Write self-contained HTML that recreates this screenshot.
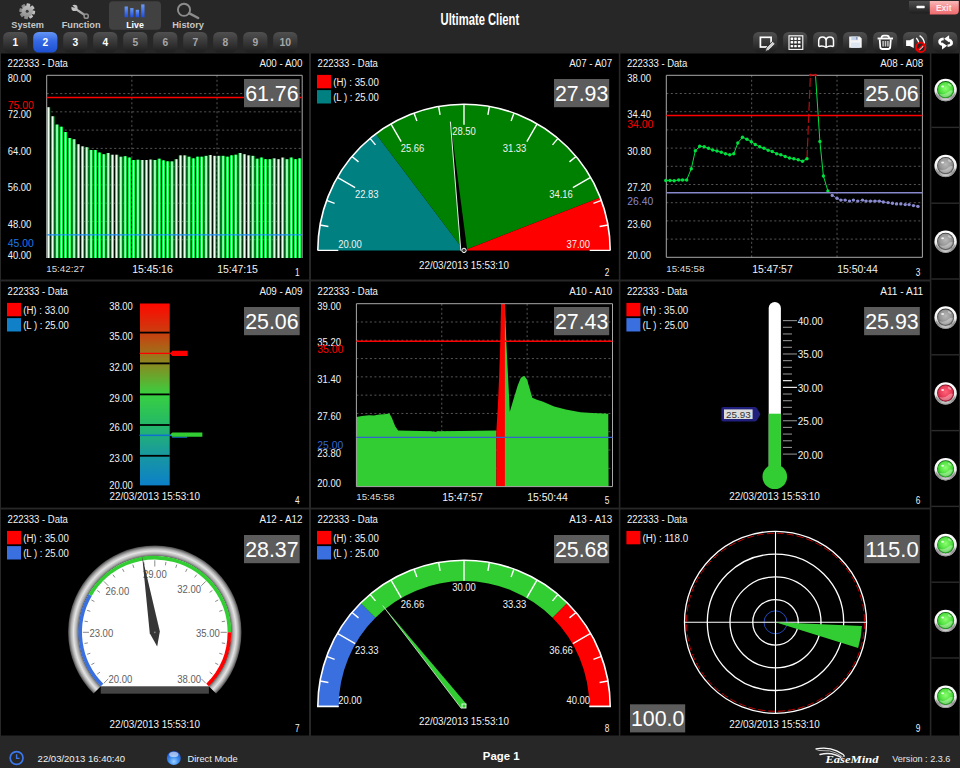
<!DOCTYPE html>
<html lang="en"><head><meta charset="utf-8"><title>Ultimate Client</title>
<style>
html,body{margin:0;padding:0;background:#272727;}
body{width:960px;height:768px;overflow:hidden;position:relative;font-family:"Liberation Sans","DejaVu Sans",sans-serif;}
header,main,aside,footer,section{position:absolute;margin:0;padding:0;overflow:hidden}
header{left:0;top:0;width:960px;height:53px}
main{left:0;top:53px;width:930px;height:684px}
aside{left:930px;top:53px;width:30px;height:684px}
footer{left:0;top:737px;width:960px;height:31px}
svg{position:absolute;left:0;top:0;display:block}
svg.defs{width:0;height:0}
text{font-family:"Liberation Sans","DejaVu Sans",sans-serif;}
.gd{stroke:#606060;stroke-width:0.9;stroke-dasharray:2 2.5;fill:none}
</style></head>
<body>
<svg class="defs" width="0" height="0" aria-hidden="true">
<defs>
<linearGradient id="barg" x1="0" x2="1" y1="0" y2="0"><stop offset="0" stop-color="#00e63c"/><stop offset="0.26" stop-color="#10ff4c"/><stop offset="0.42" stop-color="#f0fff0"/><stop offset="0.58" stop-color="#f0fff0"/><stop offset="0.74" stop-color="#10ff4c"/><stop offset="1" stop-color="#00e63c"/></linearGradient>
</defs><defs>
<linearGradient id="lvl" x1="0" x2="0" y1="0" y2="1">
<stop offset="0" stop-color="#ff0800"/><stop offset="0.166" stop-color="#c84010"/><stop offset="0.333" stop-color="#8a8a20"/>
<stop offset="0.5" stop-color="#38d040"/><stop offset="0.667" stop-color="#24b868"/><stop offset="0.833" stop-color="#1898a0"/><stop offset="1" stop-color="#0c80c8"/>
</linearGradient>
<linearGradient id="bez" gradientUnits="userSpaceOnUse" x1="0" x2="1" y1="0" y2="0"><stop offset="0" stop-color="#444"/></linearGradient>
<radialGradient id="bezel" gradientUnits="userSpaceOnUse" cx="154.8" cy="632.3" r="87">
<stop offset="0.875" stop-color="#626262"/><stop offset="0.905" stop-color="#b4b4b4"/><stop offset="0.935" stop-color="#e4e4e4"/><stop offset="0.962" stop-color="#b0b0b0"/><stop offset="1" stop-color="#404040"/>
</radialGradient>
<linearGradient id="btn" x1="0" x2="0" y1="0" y2="1"><stop offset="0" stop-color="#505050"/><stop offset="0.45" stop-color="#3a3a3a"/><stop offset="1" stop-color="#1e1e1e"/></linearGradient>
<linearGradient id="btnb" x1="0" x2="0" y1="0" y2="1"><stop offset="0" stop-color="#6494f4"/><stop offset="0.45" stop-color="#3468e4"/><stop offset="1" stop-color="#1c50d0"/></linearGradient>
<linearGradient id="exitg" x1="0" x2="0" y1="0" y2="1"><stop offset="0" stop-color="#f8b8b8"/><stop offset="0.5" stop-color="#f48c8c"/><stop offset="1" stop-color="#ee6c70"/></linearGradient>
<linearGradient id="liveb" x1="0" x2="0" y1="0" y2="1"><stop offset="0" stop-color="#6c9cf8"/><stop offset="1" stop-color="#1c4ce0"/></linearGradient>
<linearGradient id="ring" x1="0" x2="0" y1="0" y2="1"><stop offset="0" stop-color="#ffffff"/><stop offset="0.55" stop-color="#f0f0f0"/><stop offset="0.8" stop-color="#9a9a9a"/><stop offset="1" stop-color="#e8e8e8"/></linearGradient>
<radialGradient id="ledg" cx="0.5" cy="0.4" r="0.6"><stop offset="0" stop-color="#8cff70"/><stop offset="0.6" stop-color="#50e040"/><stop offset="1" stop-color="#1c9c1c"/></radialGradient>
<radialGradient id="ledx" cx="0.5" cy="0.4" r="0.6"><stop offset="0" stop-color="#b8b8b8"/><stop offset="0.6" stop-color="#969696"/><stop offset="1" stop-color="#5c5c5c"/></radialGradient>
<radialGradient id="ledr" cx="0.5" cy="0.4" r="0.6"><stop offset="0" stop-color="#ff6478"/><stop offset="0.6" stop-color="#e83c58"/><stop offset="1" stop-color="#a01830"/></radialGradient>
<radialGradient id="orb" cx="0.5" cy="0.75" r="0.7"><stop offset="0" stop-color="#9cd0ff"/><stop offset="0.5" stop-color="#3c8cf0"/><stop offset="1" stop-color="#1c50c8"/></radialGradient>
<linearGradient id="gearg" gradientUnits="userSpaceOnUse" x1="0" x2="0" y1="3" y2="19"><stop offset="0" stop-color="#c4c4c4"/><stop offset="1" stop-color="#888888"/></linearGradient>
<linearGradient id="wrg" gradientUnits="userSpaceOnUse" x1="75" y1="8" x2="86" y2="16"><stop offset="0" stop-color="#c4c4c4"/><stop offset="1" stop-color="#909090"/></linearGradient>
</defs>
</svg>
<header>
<svg width="960" height="53" viewBox="0 0 960 53" role="img" aria-label="Toolbar">
<g fill="url(#gearg)"><rect x="25.3" y="3.4000000000000004" width="3.8" height="15.8" rx="0.7" transform="rotate(10 27.2 11.3)"/><rect x="25.3" y="3.4000000000000004" width="3.8" height="15.8" rx="0.7" transform="rotate(55 27.2 11.3)"/><rect x="25.3" y="3.4000000000000004" width="3.8" height="15.8" rx="0.7" transform="rotate(100 27.2 11.3)"/><rect x="25.3" y="3.4000000000000004" width="3.8" height="15.8" rx="0.7" transform="rotate(145 27.2 11.3)"/><circle cx="27.2" cy="11.3" r="5.5"/></g><circle cx="27.2" cy="11.3" r="1.5" fill="#3a3a3a"/><text x="11.30" y="27.60" font-size="9.3" fill="#c6c6c6" font-weight="bold" textLength="32.60" lengthAdjust="spacingAndGlyphs">System</text><path d="M75.6 8.9L85 15.3" stroke="url(#wrg)" stroke-width="2.3" fill="none"/><circle cx="74.5" cy="7.9" r="3.1" fill="#c0c0c0"/><path d="M75.1 8.1L70.6 6.5L71.6 4.4Z" fill="#272727"/><circle cx="86.2" cy="16.2" r="2.1" fill="none" stroke="#8e8e8e" stroke-width="1.5"/><text x="61.70" y="27.60" font-size="9.3" fill="#c6c6c6" font-weight="bold" textLength="38.90" lengthAdjust="spacingAndGlyphs">Function</text><rect x="109" y="1.3" width="52" height="28.4" rx="4" fill="#414141"/><rect x="124.6" y="6.5" width="3.3" height="10.80" fill="url(#liveb)"/><rect x="130.2" y="8.1" width="3.3" height="9.20" fill="url(#liveb)"/><rect x="135.7" y="9.8" width="3.3" height="7.50" fill="url(#liveb)"/><rect x="141.2" y="4.4" width="3.3" height="12.90" fill="url(#liveb)"/><text x="126.20" y="27.60" font-size="9.3" fill="#ffffff" font-weight="bold" textLength="17.60" lengthAdjust="spacingAndGlyphs">Live</text><circle cx="184" cy="9.8" r="6.1" fill="none" stroke="#8c8c8c" stroke-width="1.9"/><path d="M189.4 13.4L198.2 18" stroke="#8c8c8c" stroke-width="2.4" stroke-linecap="round"/><text x="172.20" y="27.60" font-size="9.3" fill="#c6c6c6" font-weight="bold" textLength="31.80" lengthAdjust="spacingAndGlyphs">History</text><rect x="3.2" y="32" width="24.2" height="20.6" rx="5.5" fill="url(#btn)"/><text x="12.45" y="45.70" font-size="10.7" fill="#ffffff" font-weight="bold" textLength="5.70" lengthAdjust="spacingAndGlyphs">1</text><rect x="33.2" y="32" width="24.2" height="20.6" rx="5.5" fill="url(#btnb)"/><text x="42.45" y="45.70" font-size="10.7" fill="#ffffff" font-weight="bold" textLength="5.70" lengthAdjust="spacingAndGlyphs">2</text><rect x="63.2" y="32" width="24.2" height="20.6" rx="5.5" fill="url(#btn)"/><text x="72.45" y="45.70" font-size="10.7" fill="#ffffff" font-weight="bold" textLength="5.70" lengthAdjust="spacingAndGlyphs">3</text><rect x="93.2" y="32" width="24.2" height="20.6" rx="5.5" fill="url(#btn)"/><text x="102.45" y="45.70" font-size="10.7" fill="#ffffff" font-weight="bold" textLength="5.70" lengthAdjust="spacingAndGlyphs">4</text><rect x="123.2" y="32" width="24.2" height="20.6" rx="5.5" fill="url(#btn)"/><text x="132.45" y="45.70" font-size="10.7" fill="#a6a6a6" font-weight="bold" textLength="5.70" lengthAdjust="spacingAndGlyphs">5</text><rect x="153.2" y="32" width="24.2" height="20.6" rx="5.5" fill="url(#btn)"/><text x="162.45" y="45.70" font-size="10.7" fill="#a6a6a6" font-weight="bold" textLength="5.70" lengthAdjust="spacingAndGlyphs">6</text><rect x="183.2" y="32" width="24.2" height="20.6" rx="5.5" fill="url(#btn)"/><text x="192.45" y="45.70" font-size="10.7" fill="#a6a6a6" font-weight="bold" textLength="5.70" lengthAdjust="spacingAndGlyphs">7</text><rect x="213.2" y="32" width="24.2" height="20.6" rx="5.5" fill="url(#btn)"/><text x="222.45" y="45.70" font-size="10.7" fill="#a6a6a6" font-weight="bold" textLength="5.70" lengthAdjust="spacingAndGlyphs">8</text><rect x="243.2" y="32" width="24.2" height="20.6" rx="5.5" fill="url(#btn)"/><text x="252.45" y="45.70" font-size="10.7" fill="#a6a6a6" font-weight="bold" textLength="5.70" lengthAdjust="spacingAndGlyphs">9</text><rect x="273.2" y="32" width="24.2" height="20.6" rx="5.5" fill="url(#btn)"/><text x="279.50" y="45.70" font-size="10.7" fill="#a6a6a6" font-weight="bold" textLength="11.60" lengthAdjust="spacingAndGlyphs">10</text><text x="440.60" y="24.70" font-size="17" fill="#ffffff" font-weight="bold" textLength="78.60" lengthAdjust="spacingAndGlyphs">Ultimate Client</text><path d="M909 1h21v12.6h-17.5a3.5 3.5 0 0 1-3.5-3.5z" fill="url(#btn)"/><rect x="916.5" y="5.8" width="8.2" height="2.4" rx="0.6" fill="#ffffff"/><path d="M929.8 1h29v9.4a4 4 0 0 1-4 4h-25z" fill="url(#exitg)"/><text x="935.90" y="10.60" font-size="9.5" fill="#ffffff" font-weight="bold" textLength="15.70" lengthAdjust="spacingAndGlyphs" opacity="0.82">Exit</text><rect x="753.1" y="32" width="24.2" height="20.6" rx="5.5" fill="url(#btn)"/><rect x="783.1" y="32" width="24.2" height="20.6" rx="5.5" fill="url(#btn)"/><rect x="813.1" y="32" width="24.2" height="20.6" rx="5.5" fill="url(#btn)"/><rect x="843.1" y="32" width="24.2" height="20.6" rx="5.5" fill="url(#btn)"/><rect x="873.1" y="32" width="24.2" height="20.6" rx="5.5" fill="url(#btn)"/><rect x="903.1" y="32" width="24.2" height="20.6" rx="5.5" fill="url(#btn)"/><rect x="933.1" y="32" width="24.2" height="20.6" rx="5.5" fill="url(#btn)"/><rect x="760.4" y="37.3" width="10.7" height="9.7" fill="none" stroke="#ffffff" stroke-width="1.7"/><path d="M772.6 41.2l2.7 2.7-6.6 6.4-3.4 1.2 0.9-3.6z" fill="#d2d2d2" stroke="#2c2c2c" stroke-width="0.9"/><rect x="789" y="35.8" width="13.8" height="13.6" fill="none" stroke="#ffffff" stroke-width="1.1"/><rect x="790.6" y="37.5" width="2.6" height="2.4" rx="0.6" fill="#ffffff"/><rect x="790.6" y="41.099999999999994" width="2.6" height="2.4" rx="0.6" fill="#ffffff"/><rect x="790.6" y="44.9" width="2.6" height="2.4" rx="0.6" fill="#ffffff"/><rect x="794.2" y="37.5" width="2.6" height="2.4" rx="0.6" fill="#ffffff"/><rect x="794.2" y="41.099999999999994" width="2.6" height="2.4" rx="0.6" fill="#ffffff"/><rect x="794.2" y="44.9" width="2.6" height="2.4" rx="0.6" fill="#ffffff"/><rect x="797.9000000000001" y="37.5" width="2.6" height="2.4" rx="0.6" fill="#ffffff"/><rect x="797.9000000000001" y="41.099999999999994" width="2.6" height="2.4" rx="0.6" fill="#ffffff"/><rect x="797.9000000000001" y="44.9" width="2.6" height="2.4" rx="0.6" fill="#ffffff"/><path d="M818.7 46.6V40.6Q818.9 37 822.4 37T826.1 40.6V47.4M826.1 40.6Q826.3 37 829.9 37T833.5 40.6V46.6M818.7 46.6q3.9-1.5 7.4 0.9q3.6-2.4 7.4-0.9" fill="none" stroke="#ffffff" stroke-width="1.5" stroke-linejoin="round"/><path d="M849.2 36.6h10.6l1.9 1.9v9.3h-12.5z" fill="#f4f4f4"/><rect x="851.3" y="36.6" width="6.6" height="3.6" fill="#c4d2e8"/><rect x="856" y="37" width="1.4" height="2.6" fill="#8c9cb8"/><rect x="851" y="42.6" width="8.8" height="5.2" fill="#dce4f0"/><g fill="none" stroke="#ffffff" stroke-linejoin="round"><path d="M877.6 38.5h15.4" stroke-width="1.9"/><path d="M881.4 38q0.2-2.4 2.4-2.4h3q2.2 0 2.4 2.4" stroke-width="1.6"/><path d="M879.7 39.4l0.6 7.8q0.2 1.8 2 1.8h5.9q1.8 0 2-1.8l0.6-7.8" stroke-width="1.8"/><path d="M883.1 41v5.4M885.5 41v5.4M887.9 41v5.4" stroke-width="1.5" stroke="#c4c4c4"/></g><path d="M906.1 40.3h3.7l3.9-2.1v9.8l-3.9-2.1h-3.7z" fill="#ffffff"/><path d="M916.3 38q3.9 4.6 2.2 9.8M919.6 35.6q5.2 3.6 4.6 8.4q-0.6 3.6-3.6 6.2" fill="none" stroke="#ffffff" stroke-width="1.3"/><circle cx="920.7" cy="47.4" r="4.7" fill="#242424" stroke="#f40000" stroke-width="1.8"/><path d="M917.5 50.4l6.2-5.8" stroke="#f40000" stroke-width="1.7"/><path d="M919.4 49.9q2.6-1.6 3.8-3.8" stroke="#ffffff" stroke-width="1" fill="none"/><path d="M943.6 37.6Q937.2 38.2 938.4 43Q939.4 45.6 942.4 46L942.4 43.4Q940.8 42.6 941 41.4Q941.4 40.2 943.8 40.2Z" fill="#ffffff"/><path d="M941.9 42.2l5.2 3.6-5 3.6z" fill="#ffffff"/><g transform="rotate(180 945.6 42.3)"><path d="M943.6 37.6Q937.2 38.2 938.4 43Q939.4 45.6 942.4 46L942.4 43.4Q940.8 42.6 941 41.4Q941.4 40.2 943.8 40.2Z" fill="#ffffff"/><path d="M941.9 42.2l5.2 3.6-5 3.6z" fill="#ffffff"/></g>
</svg>
</header>
<main>
<section style="left:0px;top:0px;width:310px;height:228px"><svg width="310" height="228" viewBox="0 53 310 228" role="img" aria-label="Bar chart A00">
<rect x="1" y="53.5" width="308.00" height="226.00" fill="#000"/><text x="7.60" y="67.10" font-size="10" fill="#f2f2f2" textLength="60.30" lengthAdjust="spacingAndGlyphs">222333 - Data</text><text x="259.40" y="67.10" font-size="10" fill="#f2f2f2" textLength="43.00" lengthAdjust="spacingAndGlyphs">A00 - A00</text><line x1="46.7" y1="93.57" x2="302.2" y2="93.57" class="gd"/><line x1="46.7" y1="111.84" x2="302.2" y2="111.84" class="gd"/><line x1="46.7" y1="130.11" x2="302.2" y2="130.11" class="gd"/><line x1="46.7" y1="148.38" x2="302.2" y2="148.38" class="gd"/><line x1="46.7" y1="166.65" x2="302.2" y2="166.65" class="gd"/><line x1="46.7" y1="184.92" x2="302.2" y2="184.92" class="gd"/><line x1="46.7" y1="203.19" x2="302.2" y2="203.19" class="gd"/><line x1="46.7" y1="221.46" x2="302.2" y2="221.46" class="gd"/><line x1="46.7" y1="239.73" x2="302.2" y2="239.73" class="gd"/><line x1="131.87" y1="75.3" x2="131.87" y2="258" class="gd"/><line x1="217.03" y1="75.3" x2="217.03" y2="258" class="gd"/><g fill="url(#barg)"><rect x="46.85" y="107.20" width="3.31" height="150.80"/><rect x="51.11" y="116.20" width="3.31" height="141.80"/><rect x="55.37" y="124.50" width="3.31" height="133.50"/><rect x="59.63" y="126.70" width="3.31" height="131.30"/><rect x="63.88" y="132.00" width="3.31" height="126.00"/><rect x="68.14" y="138.00" width="3.31" height="120.00"/><rect x="72.40" y="139.20" width="3.31" height="118.80"/><rect x="76.66" y="144.20" width="3.31" height="113.80"/><rect x="80.92" y="146.30" width="3.31" height="111.70"/><rect x="85.18" y="147.20" width="3.31" height="110.80"/><rect x="89.43" y="150.00" width="3.31" height="108.00"/><rect x="93.69" y="150.00" width="3.31" height="108.00"/><rect x="97.95" y="152.50" width="3.31" height="105.50"/><rect x="102.21" y="154.20" width="3.31" height="103.80"/><rect x="106.47" y="153.00" width="3.31" height="105.00"/><rect x="110.73" y="154.70" width="3.31" height="103.30"/><rect x="114.98" y="154.70" width="3.31" height="103.30"/><rect x="119.24" y="156.70" width="3.31" height="101.30"/><rect x="123.50" y="156.20" width="3.31" height="101.80"/><rect x="127.76" y="157.50" width="3.31" height="100.50"/><rect x="132.02" y="160.00" width="3.31" height="98.00"/><rect x="136.28" y="159.70" width="3.31" height="98.30"/><rect x="140.53" y="160.00" width="3.31" height="98.00"/><rect x="144.79" y="160.00" width="3.31" height="98.00"/><rect x="149.05" y="159.50" width="3.31" height="98.50"/><rect x="153.31" y="160.00" width="3.31" height="98.00"/><rect x="157.57" y="158.70" width="3.31" height="99.30"/><rect x="161.83" y="160.33" width="3.31" height="97.67"/><rect x="166.08" y="161.33" width="3.31" height="96.67"/><rect x="170.34" y="161.33" width="3.31" height="96.67"/><rect x="174.60" y="159.17" width="3.31" height="98.83"/><rect x="178.86" y="155.33" width="3.31" height="102.67"/><rect x="183.12" y="155.33" width="3.31" height="102.67"/><rect x="187.38" y="156.67" width="3.31" height="101.33"/><rect x="191.63" y="158.33" width="3.31" height="99.67"/><rect x="195.89" y="156.67" width="3.31" height="101.33"/><rect x="200.15" y="156.67" width="3.31" height="101.33"/><rect x="204.41" y="155.83" width="3.31" height="102.17"/><rect x="208.67" y="155.00" width="3.31" height="103.00"/><rect x="212.93" y="155.83" width="3.31" height="102.17"/><rect x="217.18" y="155.83" width="3.31" height="102.17"/><rect x="221.44" y="155.83" width="3.31" height="102.17"/><rect x="225.70" y="156.67" width="3.31" height="101.33"/><rect x="229.96" y="155.33" width="3.31" height="102.67"/><rect x="234.22" y="154.67" width="3.31" height="103.33"/><rect x="238.48" y="153.00" width="3.31" height="105.00"/><rect x="242.73" y="154.17" width="3.31" height="103.83"/><rect x="246.99" y="155.33" width="3.31" height="102.67"/><rect x="251.25" y="155.83" width="3.31" height="102.17"/><rect x="255.51" y="158.67" width="3.31" height="99.33"/><rect x="259.77" y="157.50" width="3.31" height="100.50"/><rect x="264.02" y="159.17" width="3.31" height="98.83"/><rect x="268.28" y="159.17" width="3.31" height="98.83"/><rect x="272.54" y="158.33" width="3.31" height="99.67"/><rect x="276.80" y="159.17" width="3.31" height="98.83"/><rect x="281.06" y="157.50" width="3.31" height="100.50"/><rect x="285.32" y="159.17" width="3.31" height="98.83"/><rect x="289.57" y="157.50" width="3.31" height="100.50"/><rect x="293.83" y="159.17" width="3.31" height="98.83"/><rect x="298.09" y="158.33" width="3.31" height="99.67"/></g><path d="M46.7 258V75.3H302.2V258" fill="none" stroke="#a8a8a8" stroke-width="1"/><line x1="46.7" y1="97.6" x2="302.2" y2="97.6" stroke="#ff0000" stroke-width="1.5"/><line x1="46.7" y1="234.8" x2="302.2" y2="234.8" stroke="#1e90ff" stroke-width="1.3"/><text x="7.70" y="81.90" font-size="10" fill="#f2f2f2" textLength="23.60" lengthAdjust="spacingAndGlyphs">80.00</text><text x="7.70" y="118.30" font-size="10" fill="#f2f2f2" textLength="23.60" lengthAdjust="spacingAndGlyphs">72.00</text><text x="7.70" y="154.90" font-size="10" fill="#f2f2f2" textLength="23.60" lengthAdjust="spacingAndGlyphs">64.00</text><text x="7.70" y="191.10" font-size="10" fill="#f2f2f2" textLength="23.60" lengthAdjust="spacingAndGlyphs">56.00</text><text x="7.70" y="228.30" font-size="10" fill="#f2f2f2" textLength="23.60" lengthAdjust="spacingAndGlyphs">48.00</text><text x="7.70" y="259.10" font-size="10" fill="#f2f2f2" textLength="23.60" lengthAdjust="spacingAndGlyphs">40.00</text><text x="7.70" y="109.10" font-size="10.5" fill="#ff0000" textLength="26.00" lengthAdjust="spacingAndGlyphs">75.00</text><text x="7.70" y="246.80" font-size="10.5" fill="#1e78e6" textLength="26.00" lengthAdjust="spacingAndGlyphs">45.00</text><text x="46.20" y="271.60" font-size="9.5" fill="#dadada" textLength="38.20" lengthAdjust="spacingAndGlyphs">15:42:27</text><text x="132.20" y="273.20" font-size="10.5" fill="#f2f2f2" textLength="40.50" lengthAdjust="spacingAndGlyphs">15:45:16</text><text x="217.20" y="273.20" font-size="10.5" fill="#f2f2f2" textLength="40.70" lengthAdjust="spacingAndGlyphs">15:47:15</text><rect x="244" y="79" width="55.70" height="28.20" fill="#5c5c5c"/><text x="245.15" y="100.80" font-size="21.4" fill="#ffffff" textLength="53.40" lengthAdjust="spacingAndGlyphs">61.76</text><text x="294.90" y="276.30" font-size="10" fill="#f2f2f2" textLength="4.60" lengthAdjust="spacingAndGlyphs">1</text>
</svg></section>
<section style="left:310px;top:0px;width:310px;height:228px"><svg width="310" height="228" viewBox="310 53 310 228" role="img" aria-label="Half gauge A07">
<rect x="311" y="53.5" width="307.80" height="226.00" fill="#000"/><text x="317.60" y="67.10" font-size="10" fill="#f2f2f2" textLength="60.30" lengthAdjust="spacingAndGlyphs">222333 - Data</text><text x="569.20" y="67.10" font-size="10" fill="#f2f2f2" textLength="43.00" lengthAdjust="spacingAndGlyphs">A07 - A07</text><rect x="317.00" y="74.90" width="14" height="13.4" fill="#ff0000"/><text x="333.20" y="85.80" font-size="10" fill="#f2f2f2" textLength="45.60" lengthAdjust="spacingAndGlyphs">(H) : 35.00</text><rect x="317.00" y="90.10" width="14" height="13.4" fill="#008080"/><text x="333.20" y="101.00" font-size="10" fill="#f2f2f2" textLength="45.60" lengthAdjust="spacingAndGlyphs">(L ) : 25.00</text><path d="M464 250.4L317.80 250.40A146.2 146.2 0 0 1 375.89 133.73Z" fill="#008080"/><path d="M464 250.4L375.89 133.73A146.2 146.2 0 0 1 600.33 197.59Z" fill="#008000"/><path d="M464 250.4L600.33 197.59A146.2 146.2 0 0 1 610.20 250.40Z" fill="#ff0000"/><path d="M317.80 250.40L338.30 250.40M320.02 225.01L328.39 226.49M326.62 200.40L334.60 203.30M337.39 177.30L355.14 187.55M352.00 156.42L358.52 161.89M370.02 138.40L375.49 144.92M390.90 123.79L401.15 141.54M414.00 113.02L416.90 121.00M438.61 106.42L440.09 114.79M464.00 104.20L464.00 124.70M489.39 106.42L487.91 114.79M514.00 113.02L511.10 121.00M537.10 123.79L526.85 141.54M557.98 138.40L552.51 144.92M576.00 156.42L569.48 161.89M590.61 177.30L572.86 187.55M601.38 200.40L593.40 203.30M607.98 225.01L599.61 226.49M610.20 250.40L589.70 250.40" stroke="#ffffff" stroke-width="1.4" fill="none"/><path d="M317.8 250.4A146.2 146.2 0 0 1 610.2 250.4" fill="none" stroke="#ffffff" stroke-width="1.6"/><text x="338.20" y="247.90" font-size="10" fill="#f2f2f2" textLength="23.60" lengthAdjust="spacingAndGlyphs">20.00</text><text x="354.90" y="198.10" font-size="10" fill="#f2f2f2" textLength="23.60" lengthAdjust="spacingAndGlyphs">22.83</text><text x="400.70" y="152.30" font-size="10" fill="#f2f2f2" textLength="23.60" lengthAdjust="spacingAndGlyphs">25.66</text><text x="452.20" y="135.30" font-size="10" fill="#f2f2f2" textLength="23.60" lengthAdjust="spacingAndGlyphs">28.50</text><text x="502.70" y="152.30" font-size="10" fill="#f2f2f2" textLength="23.60" lengthAdjust="spacingAndGlyphs">31.33</text><text x="549.20" y="198.10" font-size="10" fill="#f2f2f2" textLength="23.60" lengthAdjust="spacingAndGlyphs">34.16</text><text x="566.50" y="247.90" font-size="10" fill="#f2f2f2" textLength="23.60" lengthAdjust="spacingAndGlyphs">37.00</text><path d="M450.38 121.62L467.18 250.06L460.82 250.74Z" fill="#000000"/><path d="M450.38 121.62L460.82 250.74" stroke="#ffffff" stroke-width="0.9" fill="none"/><circle cx="464" cy="250.4" r="2.2" fill="#333" stroke="#ffffff" stroke-width="1"/><text x="419.00" y="269.00" font-size="10" fill="#f2f2f2" textLength="90.00" lengthAdjust="spacingAndGlyphs">22/03/2013 15:53:10</text><rect x="554" y="79" width="55.20" height="28.20" fill="#5c5c5c"/><text x="554.90" y="100.80" font-size="21.4" fill="#ffffff" textLength="53.40" lengthAdjust="spacingAndGlyphs">27.93</text><text x="604.70" y="276.30" font-size="10" fill="#f2f2f2" textLength="4.60" lengthAdjust="spacingAndGlyphs">2</text>
</svg></section>
<section style="left:620px;top:0px;width:310px;height:228px"><svg width="310" height="228" viewBox="620 53 310 228" role="img" aria-label="Line chart A08">
<rect x="620.4" y="53.5" width="309.40" height="226.00" fill="#000"/><text x="627.00" y="67.10" font-size="10" fill="#f2f2f2" textLength="60.30" lengthAdjust="spacingAndGlyphs">222333 - Data</text><text x="880.20" y="67.10" font-size="10" fill="#f2f2f2" textLength="43.00" lengthAdjust="spacingAndGlyphs">A08 - A08</text><line x1="666.3" y1="93.50" x2="922.4" y2="93.50" class="gd"/><line x1="666.3" y1="111.70" x2="922.4" y2="111.70" class="gd"/><line x1="666.3" y1="129.90" x2="922.4" y2="129.90" class="gd"/><line x1="666.3" y1="148.10" x2="922.4" y2="148.10" class="gd"/><line x1="666.3" y1="166.30" x2="922.4" y2="166.30" class="gd"/><line x1="666.3" y1="184.50" x2="922.4" y2="184.50" class="gd"/><line x1="666.3" y1="202.70" x2="922.4" y2="202.70" class="gd"/><line x1="666.3" y1="220.90" x2="922.4" y2="220.90" class="gd"/><line x1="666.3" y1="239.10" x2="922.4" y2="239.10" class="gd"/><line x1="751.67" y1="75.3" x2="751.67" y2="257.3" class="gd"/><line x1="837.03" y1="75.3" x2="837.03" y2="257.3" class="gd"/><path d="M666.3 257.3V75.3H922.4V257.3" fill="none" stroke="#a8a8a8" stroke-width="1"/><line x1="666.3" y1="257.3" x2="922.4" y2="257.3" stroke="#a8a8a8"/><polyline points="665.8,180.5 670.0,180.5 674.2,180.7 678.7,180.0 682.5,180.0 686.7,180.0 691.3,168.7 695.3,150.8 699.7,146.3 704.2,146.8 708.5,148.3 712.7,150.0 717.0,151.0 721.3,152.2 725.5,153.8 729.7,154.7 733.8,153.8 737.8,143.0 742.5,137.2 747.0,139.3 751.3,141.7 755.3,144.5 759.7,146.8 764.0,148.3 768.2,150.2 772.3,151.5 776.7,153.7 780.8,154.7 785.2,156.5 789.5,158.0 793.8,158.8 798.2,159.8 802.5,161.2 807.0,158.8" fill="none" stroke="#00e040" stroke-width="1"/><polyline points="807.0,158.8 810.4,75.1" fill="none" stroke="#b01010" stroke-width="1.2" stroke-dasharray="9 3"/><polyline points="810.4,75.1 815.5,75.1" fill="none" stroke="#e01010" stroke-width="1.2"/><polyline points="815.5,75.1 819.9,141.5 823.4,176.0 827.9,190.9" fill="none" stroke="#00e040" stroke-width="1"/><polyline points="827.9,190.9 832.3,195.4 837.0,198.2 840.8,200.1 845.1,200.1 849.5,201.1 853.4,200.1 857.8,201.1 862.5,200.1 866.1,201.1 870.5,201.1 875.0,201.1 879.4,201.1 883.3,202.0 888.0,202.6 892.4,203.3 896.5,203.9 900.8,203.9 905.2,204.6 909.1,204.6 913.5,205.6 918.0,206.4" fill="none" stroke="#8a8ad0" stroke-width="1" stroke-dasharray="2 2"/><circle cx="665.8" cy="180.5" r="1.7" fill="#00e040"/><circle cx="670.0" cy="180.5" r="1.7" fill="#00e040"/><circle cx="674.2" cy="180.7" r="1.7" fill="#00e040"/><circle cx="678.7" cy="180.0" r="1.7" fill="#00e040"/><circle cx="682.5" cy="180.0" r="1.7" fill="#00e040"/><circle cx="686.7" cy="180.0" r="1.7" fill="#00e040"/><circle cx="691.3" cy="168.7" r="1.7" fill="#00e040"/><circle cx="695.3" cy="150.8" r="1.7" fill="#00e040"/><circle cx="699.7" cy="146.3" r="1.7" fill="#00e040"/><circle cx="704.2" cy="146.8" r="1.7" fill="#00e040"/><circle cx="708.5" cy="148.3" r="1.7" fill="#00e040"/><circle cx="712.7" cy="150.0" r="1.7" fill="#00e040"/><circle cx="717.0" cy="151.0" r="1.7" fill="#00e040"/><circle cx="721.3" cy="152.2" r="1.7" fill="#00e040"/><circle cx="725.5" cy="153.8" r="1.7" fill="#00e040"/><circle cx="729.7" cy="154.7" r="1.7" fill="#00e040"/><circle cx="733.8" cy="153.8" r="1.7" fill="#00e040"/><circle cx="737.8" cy="143.0" r="1.7" fill="#00e040"/><circle cx="742.5" cy="137.2" r="1.7" fill="#00e040"/><circle cx="747.0" cy="139.3" r="1.7" fill="#00e040"/><circle cx="751.3" cy="141.7" r="1.7" fill="#00e040"/><circle cx="755.3" cy="144.5" r="1.7" fill="#00e040"/><circle cx="759.7" cy="146.8" r="1.7" fill="#00e040"/><circle cx="764.0" cy="148.3" r="1.7" fill="#00e040"/><circle cx="768.2" cy="150.2" r="1.7" fill="#00e040"/><circle cx="772.3" cy="151.5" r="1.7" fill="#00e040"/><circle cx="776.7" cy="153.7" r="1.7" fill="#00e040"/><circle cx="780.8" cy="154.7" r="1.7" fill="#00e040"/><circle cx="785.2" cy="156.5" r="1.7" fill="#00e040"/><circle cx="789.5" cy="158.0" r="1.7" fill="#00e040"/><circle cx="793.8" cy="158.8" r="1.7" fill="#00e040"/><circle cx="798.2" cy="159.8" r="1.7" fill="#00e040"/><circle cx="802.5" cy="161.2" r="1.7" fill="#00e040"/><circle cx="807.0" cy="158.8" r="1.7" fill="#00e040"/><circle cx="819.9" cy="141.5" r="1.7" fill="#00e040"/><circle cx="823.4" cy="176.0" r="1.7" fill="#00e040"/><circle cx="827.9" cy="190.9" r="1.7" fill="#00e040"/><circle cx="832.3" cy="195.4" r="1.7" fill="#8a8ad0"/><circle cx="837.0" cy="198.2" r="1.7" fill="#8a8ad0"/><circle cx="840.8" cy="200.1" r="1.7" fill="#8a8ad0"/><circle cx="845.1" cy="200.1" r="1.7" fill="#8a8ad0"/><circle cx="849.5" cy="201.1" r="1.7" fill="#8a8ad0"/><circle cx="853.4" cy="200.1" r="1.7" fill="#8a8ad0"/><circle cx="857.8" cy="201.1" r="1.7" fill="#8a8ad0"/><circle cx="862.5" cy="200.1" r="1.7" fill="#8a8ad0"/><circle cx="866.1" cy="201.1" r="1.7" fill="#8a8ad0"/><circle cx="870.5" cy="201.1" r="1.7" fill="#8a8ad0"/><circle cx="875.0" cy="201.1" r="1.7" fill="#8a8ad0"/><circle cx="879.4" cy="201.1" r="1.7" fill="#8a8ad0"/><circle cx="883.3" cy="202.0" r="1.7" fill="#8a8ad0"/><circle cx="888.0" cy="202.6" r="1.7" fill="#8a8ad0"/><circle cx="892.4" cy="203.3" r="1.7" fill="#8a8ad0"/><circle cx="896.5" cy="203.9" r="1.7" fill="#8a8ad0"/><circle cx="900.8" cy="203.9" r="1.7" fill="#8a8ad0"/><circle cx="905.2" cy="204.6" r="1.7" fill="#8a8ad0"/><circle cx="909.1" cy="204.6" r="1.7" fill="#8a8ad0"/><circle cx="913.5" cy="205.6" r="1.7" fill="#8a8ad0"/><circle cx="918.0" cy="206.4" r="1.7" fill="#8a8ad0"/><circle cx="810.4" cy="75.1" r="1.4" fill="#c01010"/><circle cx="815.5" cy="75.1" r="1.4" fill="#c01010"/><line x1="666.3" y1="115.5" x2="922.4" y2="115.5" stroke="#ff0000" stroke-width="1.4"/><line x1="666.3" y1="192.8" x2="922.4" y2="192.8" stroke="#8888cc" stroke-width="1.4"/><text x="627.30" y="81.90" font-size="10" fill="#f2f2f2" textLength="23.60" lengthAdjust="spacingAndGlyphs">38.00</text><text x="627.30" y="117.80" font-size="10" fill="#f2f2f2" textLength="23.60" lengthAdjust="spacingAndGlyphs">34.40</text><text x="627.30" y="154.90" font-size="10" fill="#f2f2f2" textLength="23.60" lengthAdjust="spacingAndGlyphs">30.80</text><text x="627.30" y="191.10" font-size="10" fill="#f2f2f2" textLength="23.60" lengthAdjust="spacingAndGlyphs">27.20</text><text x="627.30" y="228.30" font-size="10" fill="#f2f2f2" textLength="23.60" lengthAdjust="spacingAndGlyphs">23.60</text><text x="627.30" y="259.10" font-size="10" fill="#f2f2f2" textLength="23.60" lengthAdjust="spacingAndGlyphs">20.00</text><text x="627.30" y="127.80" font-size="10.5" fill="#ff0000" textLength="26.00" lengthAdjust="spacingAndGlyphs">34.00</text><text x="627.30" y="204.80" font-size="10.5" fill="#8888cc" textLength="26.00" lengthAdjust="spacingAndGlyphs">26.40</text><text x="666.20" y="271.60" font-size="9.5" fill="#dadada" textLength="38.20" lengthAdjust="spacingAndGlyphs">15:45:58</text><text x="752.20" y="273.20" font-size="10.5" fill="#f2f2f2" textLength="40.50" lengthAdjust="spacingAndGlyphs">15:47:57</text><text x="837.20" y="273.20" font-size="10.5" fill="#f2f2f2" textLength="40.70" lengthAdjust="spacingAndGlyphs">15:50:44</text><rect x="864.1" y="79" width="55.70" height="28.20" fill="#5c5c5c"/><text x="865.25" y="100.80" font-size="21.4" fill="#ffffff" textLength="53.40" lengthAdjust="spacingAndGlyphs">25.06</text><text x="915.70" y="276.30" font-size="10" fill="#f2f2f2" textLength="4.60" lengthAdjust="spacingAndGlyphs">3</text>
</svg></section>
<section style="left:0px;top:228px;width:310px;height:228px"><svg width="310" height="228" viewBox="0 281 310 228" role="img" aria-label="Level bar A09">
<rect x="1" y="281.5" width="308.00" height="226.10" fill="#000"/><text x="7.60" y="295.10" font-size="10" fill="#f2f2f2" textLength="60.30" lengthAdjust="spacingAndGlyphs">222333 - Data</text><text x="259.40" y="295.10" font-size="10" fill="#f2f2f2" textLength="43.00" lengthAdjust="spacingAndGlyphs">A09 - A09</text><rect x="7.00" y="302.90" width="14" height="13.4" fill="#ff0000"/><text x="23.20" y="313.80" font-size="10" fill="#f2f2f2" textLength="45.60" lengthAdjust="spacingAndGlyphs">(H) : 33.00</text><rect x="7.00" y="318.10" width="14" height="13.4" fill="#1080c8"/><text x="23.20" y="329.00" font-size="10" fill="#f2f2f2" textLength="45.60" lengthAdjust="spacingAndGlyphs">(L ) : 25.00</text><rect x="140" y="303.5" width="29.70" height="181.90" fill="url(#lvl)"/><rect x="140" y="331.70" width="29.70" height="1.8" fill="#000"/><rect x="140" y="362.50" width="29.70" height="1.8" fill="#000"/><rect x="140" y="393.50" width="29.70" height="1.8" fill="#000"/><rect x="140" y="424.10" width="29.70" height="1.8" fill="#000"/><rect x="140" y="454.90" width="29.70" height="1.8" fill="#000"/><text x="109.20" y="310.10" font-size="10" fill="#f2f2f2" textLength="23.60" lengthAdjust="spacingAndGlyphs">38.00</text><text x="109.20" y="340.20" font-size="10" fill="#f2f2f2" textLength="23.60" lengthAdjust="spacingAndGlyphs">35.00</text><text x="109.20" y="371.10" font-size="10" fill="#f2f2f2" textLength="23.60" lengthAdjust="spacingAndGlyphs">32.00</text><text x="109.20" y="401.60" font-size="10" fill="#f2f2f2" textLength="23.60" lengthAdjust="spacingAndGlyphs">29.00</text><text x="109.20" y="431.30" font-size="10" fill="#f2f2f2" textLength="23.60" lengthAdjust="spacingAndGlyphs">26.00</text><text x="109.20" y="462.00" font-size="10" fill="#f2f2f2" textLength="23.60" lengthAdjust="spacingAndGlyphs">23.00</text><text x="109.20" y="489.30" font-size="10" fill="#f2f2f2" textLength="23.60" lengthAdjust="spacingAndGlyphs">20.00</text><line x1="139.5" y1="353.4" x2="171.7" y2="353.4" stroke="#ff0000" stroke-width="1.3"/><path d="M170.0 353.4l2.4 -2.6h15.2v5.2h-15.2z" fill="#ff0000"/><line x1="139.5" y1="435.3" x2="171" y2="435.3" stroke="#1070d0" stroke-width="1.5"/><path d="M171 436.4l1.5 1.4h14.6v-1.4z" fill="#1070d0"/><path d="M170.2 434.6l2.2 -2.1h30v4.2h-30z" fill="#32cd32"/><text x="109.55" y="500.00" font-size="10" fill="#f2f2f2" textLength="90.50" lengthAdjust="spacingAndGlyphs">22/03/2013 15:53:10</text><rect x="244" y="307" width="55.70" height="28.20" fill="#5c5c5c"/><text x="245.15" y="328.80" font-size="21.4" fill="#ffffff" textLength="53.40" lengthAdjust="spacingAndGlyphs">25.06</text><text x="294.90" y="504.40" font-size="10" fill="#f2f2f2" textLength="4.60" lengthAdjust="spacingAndGlyphs">4</text>
</svg></section>
<section style="left:310px;top:228px;width:310px;height:228px"><svg width="310" height="228" viewBox="310 281 310 228" role="img" aria-label="Area chart A10">
<rect x="311" y="281.5" width="307.80" height="226.10" fill="#000"/><text x="317.60" y="295.10" font-size="10" fill="#f2f2f2" textLength="60.30" lengthAdjust="spacingAndGlyphs">222333 - Data</text><text x="569.20" y="295.10" font-size="10" fill="#f2f2f2" textLength="43.00" lengthAdjust="spacingAndGlyphs">A10 - A10</text><line x1="356.4" y1="321.99" x2="612.5" y2="321.99" class="gd"/><line x1="356.4" y1="340.28" x2="612.5" y2="340.28" class="gd"/><line x1="356.4" y1="358.57" x2="612.5" y2="358.57" class="gd"/><line x1="356.4" y1="376.86" x2="612.5" y2="376.86" class="gd"/><line x1="356.4" y1="395.15" x2="612.5" y2="395.15" class="gd"/><line x1="356.4" y1="413.44" x2="612.5" y2="413.44" class="gd"/><line x1="356.4" y1="431.73" x2="612.5" y2="431.73" class="gd"/><line x1="356.4" y1="450.02" x2="612.5" y2="450.02" class="gd"/><line x1="356.4" y1="468.31" x2="612.5" y2="468.31" class="gd"/><line x1="441.77" y1="303.7" x2="441.77" y2="486.6" class="gd"/><line x1="527.13" y1="303.7" x2="527.13" y2="486.6" class="gd"/><polygon points="356.4,486.6 356.4,416.9 362.0,416.0 369.0,415.2 374.0,415.6 379.2,414.6 384.0,414.2 389.4,413.4 391.7,417.5 395.2,426.2 398.1,430.6 420.0,430.9 431.7,431.2 434.6,432.1 437.5,431.2 460.0,430.9 496.4,430.6 496.4,486.6" fill="#32cd32"/><polygon points="496.4,486.6 496.4,430.6 497.9,405.0 499.1,378.0 500.2,345.0 501.1,303.7 505.0,303.7 505.0,486.6" fill="#ff0000"/><polygon points="504.9,486.6 504.9,303.7 506.5,345.0 509.8,411.7 513.3,400.0 517.7,385.4 520.5,378.5 522.1,376.7 524.4,376.1 527.0,379.6 529.5,388.0 532.3,397.7 537.0,399.8 542.5,401.5 554.2,406.4 565.8,409.6 580.4,412.2 592.1,413.1 608.3,413.7 608.6,486.6" fill="#32cd32"/><path d="M356.4 486.6V303.7H612.5V486.6" fill="none" stroke="#a8a8a8" stroke-width="1"/><line x1="356.4" y1="486.6" x2="612.5" y2="486.6" stroke="#a8a8a8"/><line x1="356.4" y1="341.3" x2="612.5" y2="341.3" stroke="#ff0000" stroke-width="1.4"/><line x1="356.4" y1="437.4" x2="612.5" y2="437.4" stroke="#3264d2" stroke-width="1.4"/><text x="317.30" y="310.20" font-size="10" fill="#f2f2f2" textLength="23.60" lengthAdjust="spacingAndGlyphs">39.00</text><text x="317.30" y="345.80" font-size="10" fill="#f2f2f2" textLength="23.60" lengthAdjust="spacingAndGlyphs">35.20</text><text x="317.30" y="383.40" font-size="10" fill="#f2f2f2" textLength="23.60" lengthAdjust="spacingAndGlyphs">31.40</text><text x="317.30" y="420.00" font-size="10" fill="#f2f2f2" textLength="23.60" lengthAdjust="spacingAndGlyphs">27.60</text><text x="317.30" y="456.60" font-size="10" fill="#f2f2f2" textLength="23.60" lengthAdjust="spacingAndGlyphs">23.80</text><text x="317.30" y="487.30" font-size="10" fill="#f2f2f2" textLength="23.60" lengthAdjust="spacingAndGlyphs">20.00</text><text x="317.30" y="353.30" font-size="10.5" fill="#ff0000" textLength="26.00" lengthAdjust="spacingAndGlyphs">35.00</text><text x="317.30" y="448.50" font-size="10.5" fill="#3264d2" textLength="26.00" lengthAdjust="spacingAndGlyphs">25.00</text><text x="356.20" y="499.60" font-size="9.5" fill="#dadada" textLength="38.20" lengthAdjust="spacingAndGlyphs">15:45:58</text><text x="442.20" y="501.20" font-size="10.5" fill="#f2f2f2" textLength="40.50" lengthAdjust="spacingAndGlyphs">15:47:57</text><text x="527.20" y="501.20" font-size="10.5" fill="#f2f2f2" textLength="40.70" lengthAdjust="spacingAndGlyphs">15:50:44</text><rect x="554" y="307" width="55.20" height="28.20" fill="#5c5c5c"/><text x="554.90" y="328.80" font-size="21.4" fill="#ffffff" textLength="53.40" lengthAdjust="spacingAndGlyphs">27.43</text><text x="604.70" y="504.40" font-size="10" fill="#f2f2f2" textLength="4.60" lengthAdjust="spacingAndGlyphs">5</text>
</svg></section>
<section style="left:620px;top:228px;width:310px;height:228px"><svg width="310" height="228" viewBox="620 281 310 228" role="img" aria-label="Thermometer A11">
<rect x="620.4" y="281.5" width="309.40" height="226.10" fill="#000"/><text x="627.00" y="295.10" font-size="10" fill="#f2f2f2" textLength="60.30" lengthAdjust="spacingAndGlyphs">222333 - Data</text><text x="880.20" y="295.10" font-size="10" fill="#f2f2f2" textLength="43.00" lengthAdjust="spacingAndGlyphs">A11 - A11</text><rect x="626.40" y="302.90" width="14" height="13.4" fill="#ff0000"/><text x="642.60" y="313.80" font-size="10" fill="#f2f2f2" textLength="45.60" lengthAdjust="spacingAndGlyphs">(H) : 35.00</text><rect x="626.40" y="318.10" width="14" height="13.4" fill="#3a6fe0"/><text x="642.60" y="329.00" font-size="10" fill="#f2f2f2" textLength="45.60" lengthAdjust="spacingAndGlyphs">(L ) : 25.00</text><path d="M768.6999999999999 470V308.1a6.1 6.1 0 0 1 12.2 0V470z" fill="#ffffff"/><rect x="768.6999999999999" y="413.7" width="12.2" height="58" fill="#32cd32"/><circle cx="774.8" cy="476.8" r="12.3" fill="#32cd32"/><line x1="782.9" y1="454.10" x2="797" y2="454.10" stroke="#8c8c8c" stroke-width="1.1"/><text x="797.80" y="458.50" font-size="10.5" fill="#f2f2f2" textLength="25.00" lengthAdjust="spacingAndGlyphs">20.00</text><line x1="782.9" y1="447.43" x2="792" y2="447.43" stroke="#8c8c8c" stroke-width="1.1"/><line x1="782.9" y1="440.75" x2="792" y2="440.75" stroke="#8c8c8c" stroke-width="1.1"/><line x1="782.9" y1="434.08" x2="792" y2="434.08" stroke="#8c8c8c" stroke-width="1.1"/><line x1="782.9" y1="427.40" x2="792" y2="427.40" stroke="#8c8c8c" stroke-width="1.1"/><line x1="782.9" y1="420.73" x2="797" y2="420.73" stroke="#8c8c8c" stroke-width="1.1"/><text x="797.80" y="425.12" font-size="10.5" fill="#f2f2f2" textLength="25.00" lengthAdjust="spacingAndGlyphs">25.00</text><line x1="782.9" y1="414.05" x2="792" y2="414.05" stroke="#8c8c8c" stroke-width="1.1"/><line x1="782.9" y1="407.38" x2="792" y2="407.38" stroke="#8c8c8c" stroke-width="1.1"/><line x1="782.9" y1="400.70" x2="792" y2="400.70" stroke="#8c8c8c" stroke-width="1.1"/><line x1="782.9" y1="394.03" x2="792" y2="394.03" stroke="#8c8c8c" stroke-width="1.1"/><line x1="782.9" y1="387.35" x2="797" y2="387.35" stroke="#ffffff" stroke-width="1.1"/><text x="797.80" y="391.75" font-size="10.5" fill="#f2f2f2" textLength="25.00" lengthAdjust="spacingAndGlyphs">30.00</text><line x1="782.9" y1="380.68" x2="792" y2="380.68" stroke="#ffffff" stroke-width="1.1"/><line x1="782.9" y1="374.00" x2="792" y2="374.00" stroke="#8c8c8c" stroke-width="1.1"/><line x1="782.9" y1="367.33" x2="792" y2="367.33" stroke="#8c8c8c" stroke-width="1.1"/><line x1="782.9" y1="360.65" x2="792" y2="360.65" stroke="#8c8c8c" stroke-width="1.1"/><line x1="782.9" y1="353.98" x2="797" y2="353.98" stroke="#8c8c8c" stroke-width="1.1"/><text x="797.80" y="358.38" font-size="10.5" fill="#f2f2f2" textLength="25.00" lengthAdjust="spacingAndGlyphs">35.00</text><line x1="782.9" y1="347.30" x2="792" y2="347.30" stroke="#8c8c8c" stroke-width="1.1"/><line x1="782.9" y1="340.62" x2="792" y2="340.62" stroke="#8c8c8c" stroke-width="1.1"/><line x1="782.9" y1="333.95" x2="792" y2="333.95" stroke="#8c8c8c" stroke-width="1.1"/><line x1="782.9" y1="327.28" x2="792" y2="327.28" stroke="#8c8c8c" stroke-width="1.1"/><line x1="782.9" y1="320.60" x2="797" y2="320.60" stroke="#8c8c8c" stroke-width="1.1"/><text x="797.80" y="325.00" font-size="10.5" fill="#f2f2f2" textLength="25.00" lengthAdjust="spacingAndGlyphs">40.00</text><path d="M723 407h31.5q1.5 0 2.4 1.2l3.6 6-3.6 6q-.9 1.2-2.4 1.2h-31.5q-1.6 0-1.6-1.6v-11.2q0-1.6 1.6-1.6z" fill="#20207c"/><rect x="724" y="409.4" width="28.6" height="9.6" fill="#dcdcdc"/><text x="726.00" y="417.80" font-size="9.5" fill="#333333" textLength="24.60" lengthAdjust="spacingAndGlyphs">25.93</text><text x="729.35" y="500.00" font-size="10" fill="#f2f2f2" textLength="90.50" lengthAdjust="spacingAndGlyphs">22/03/2013 15:53:10</text><rect x="864.1" y="307" width="55.70" height="28.20" fill="#5c5c5c"/><text x="865.25" y="328.80" font-size="21.4" fill="#ffffff" textLength="53.40" lengthAdjust="spacingAndGlyphs">25.93</text><text x="915.70" y="504.40" font-size="10" fill="#f2f2f2" textLength="4.60" lengthAdjust="spacingAndGlyphs">6</text>
</svg></section>
<section style="left:0px;top:456px;width:310px;height:228px"><svg width="310" height="228" viewBox="0 509 310 228" role="img" aria-label="Dial gauge A12">
<rect x="1" y="509.5" width="308.00" height="226.00" fill="#000"/><text x="7.60" y="523.10" font-size="10" fill="#f2f2f2" textLength="60.30" lengthAdjust="spacingAndGlyphs">222333 - Data</text><text x="259.40" y="523.10" font-size="10" fill="#f2f2f2" textLength="43.00" lengthAdjust="spacingAndGlyphs">A12 - A12</text><rect x="7.00" y="530.90" width="14" height="13.4" fill="#ff0000"/><text x="23.20" y="541.80" font-size="10" fill="#f2f2f2" textLength="45.60" lengthAdjust="spacingAndGlyphs">(H) : 35.00</text><rect x="7.00" y="546.10" width="14" height="13.4" fill="#3a6fe0"/><text x="23.20" y="557.00" font-size="10" fill="#f2f2f2" textLength="45.60" lengthAdjust="spacingAndGlyphs">(L ) : 25.00</text><path d="M100.71 686.39A76.5 76.5 0 1 1 208.89 686.39Z" fill="#ffffff"/><path d="M97.17 689.93A81.5 81.5 0 1 1 212.43 689.93" fill="none" stroke="url(#bezel)" stroke-width="10.4"/><rect x="100.71" y="686.89" width="108.19" height="6.8" fill="#444444"/><path d="M102.05 685.05A74.6 74.6 0 0 1 90.19 595.00" fill="none" stroke="#3a6fe0" stroke-width="3.6"/><path d="M90.19 595.00A74.6 74.6 0 0 1 229.40 632.30" fill="none" stroke="#32cd32" stroke-width="3.6"/><path d="M229.40 632.30A74.6 74.6 0 0 1 207.55 685.05" fill="none" stroke="#ff0000" stroke-width="3.6"/><path d="M103.89 683.21L108.27 678.83M97.20 674.15L99.95 672.15M91.36 664.62L94.39 663.08M87.08 654.30L90.32 653.25M84.48 643.44L87.83 642.91M82.80 632.30L89.00 632.30M84.48 621.16L87.83 621.69M87.08 610.30L90.32 611.35M91.36 599.98L94.39 601.52M97.20 590.45L99.95 592.45M103.89 581.39L108.27 585.77M112.95 574.70L114.95 577.45M122.48 568.86L124.02 571.89M132.80 564.58L133.85 567.82M143.66 561.98L144.19 565.33M154.80 560.30L154.80 566.50M165.94 561.98L165.41 565.33M176.80 564.58L175.75 567.82M187.12 568.86L185.58 571.89M196.65 574.70L194.65 577.45M205.71 581.39L201.33 585.77M212.40 590.45L209.65 592.45M218.24 599.98L215.21 601.52M222.52 610.30L219.28 611.35M225.12 621.16L221.77 621.69M226.80 632.30L220.60 632.30M225.12 643.44L221.77 642.91M222.52 654.30L219.28 653.25M218.24 664.62L215.21 663.08M212.40 674.15L209.65 672.15M205.71 683.21L201.33 678.83" stroke="#8a8a8a" stroke-width="1" fill="none"/><text x="108.50" y="682.90" font-size="10.2" fill="#606060" textLength="23.80" lengthAdjust="spacingAndGlyphs">20.00</text><text x="89.40" y="637.00" font-size="10.2" fill="#606060" textLength="23.80" lengthAdjust="spacingAndGlyphs">23.00</text><text x="105.40" y="595.20" font-size="10.2" fill="#606060" textLength="23.80" lengthAdjust="spacingAndGlyphs">26.00</text><text x="142.90" y="578.10" font-size="10.2" fill="#606060" textLength="23.80" lengthAdjust="spacingAndGlyphs">29.00</text><text x="177.30" y="593.10" font-size="10.2" fill="#606060" textLength="23.80" lengthAdjust="spacingAndGlyphs">32.00</text><text x="196.00" y="637.00" font-size="10.2" fill="#606060" textLength="23.80" lengthAdjust="spacingAndGlyphs">35.00</text><text x="177.30" y="682.90" font-size="10.2" fill="#606060" textLength="23.80" lengthAdjust="spacingAndGlyphs">38.00</text><path d="M142.16 556.34L149.77 633.14L157.18 646.60L159.83 631.46Z" fill="#363636"/><circle cx="154.8" cy="632.3" r="0.9" fill="#888"/><text x="109.55" y="727.80" font-size="10" fill="#f2f2f2" textLength="90.50" lengthAdjust="spacingAndGlyphs">22/03/2013 15:53:10</text><rect x="244" y="535" width="55.70" height="28.20" fill="#5c5c5c"/><text x="245.15" y="556.80" font-size="21.4" fill="#ffffff" textLength="53.40" lengthAdjust="spacingAndGlyphs">28.37</text><text x="294.90" y="732.30" font-size="10" fill="#f2f2f2" textLength="4.60" lengthAdjust="spacingAndGlyphs">7</text>
</svg></section>
<section style="left:310px;top:456px;width:310px;height:228px"><svg width="310" height="228" viewBox="310 509 310 228" role="img" aria-label="Arc gauge A13">
<rect x="311" y="509.5" width="307.80" height="226.00" fill="#000"/><text x="317.60" y="523.10" font-size="10" fill="#f2f2f2" textLength="60.30" lengthAdjust="spacingAndGlyphs">222333 - Data</text><text x="569.20" y="523.10" font-size="10" fill="#f2f2f2" textLength="43.00" lengthAdjust="spacingAndGlyphs">A13 - A13</text><rect x="317.00" y="530.90" width="14" height="13.4" fill="#ff0000"/><text x="333.20" y="541.80" font-size="10" fill="#f2f2f2" textLength="45.60" lengthAdjust="spacingAndGlyphs">(H) : 35.00</text><rect x="317.00" y="546.10" width="14" height="13.4" fill="#3a6fe0"/><text x="333.20" y="557.00" font-size="10" fill="#f2f2f2" textLength="45.60" lengthAdjust="spacingAndGlyphs">(L ) : 25.00</text><path d="M338.70 706.40L317.80 706.40A146.2 146.2 0 0 1 360.62 603.02L375.40 617.80A125.3 125.3 0 0 0 338.70 706.40Z" fill="#3a6fe0"/><path d="M375.40 617.80L360.62 603.02A146.2 146.2 0 0 1 567.38 603.02L552.60 617.80A125.3 125.3 0 0 0 375.40 617.80Z" fill="#32cd32"/><path d="M552.60 617.80L567.38 603.02A146.2 146.2 0 0 1 610.20 706.40L589.30 706.40A125.3 125.3 0 0 0 552.60 617.80Z" fill="#ff0000"/><path d="M317.80 706.40L338.30 706.40M320.02 681.01L328.39 682.49M326.62 656.40L334.60 659.30M337.39 633.30L355.14 643.55M352.00 612.42L358.52 617.89M370.02 594.40L375.49 600.92M390.90 579.79L401.15 597.54M414.00 569.02L416.90 577.00M438.61 562.42L440.09 570.79M464.00 560.20L464.00 580.70M489.39 562.42L487.91 570.79M514.00 569.02L511.10 577.00M537.10 579.79L526.85 597.54M557.98 594.40L552.51 600.92M576.00 612.42L569.48 617.89M590.61 633.30L572.86 643.55M601.38 656.40L593.40 659.30M607.98 681.01L599.61 682.49M610.20 706.40L589.70 706.40" stroke="#ffffff" stroke-width="1.4" fill="none"/><path d="M317.8 706.4A146.2 146.2 0 0 1 610.2 706.4" fill="none" stroke="#ffffff" stroke-width="1.6"/><path d="M317.0 706.4H338.7M589.3 706.4H611.0" stroke="#ffffff" stroke-width="1.5"/><text x="338.20" y="703.90" font-size="10" fill="#f2f2f2" textLength="23.60" lengthAdjust="spacingAndGlyphs">20.00</text><text x="354.90" y="653.60" font-size="10" fill="#f2f2f2" textLength="23.60" lengthAdjust="spacingAndGlyphs">23.33</text><text x="400.70" y="608.10" font-size="10" fill="#f2f2f2" textLength="23.60" lengthAdjust="spacingAndGlyphs">26.66</text><text x="452.20" y="591.30" font-size="10" fill="#f2f2f2" textLength="23.60" lengthAdjust="spacingAndGlyphs">30.00</text><text x="502.70" y="608.10" font-size="10" fill="#f2f2f2" textLength="23.60" lengthAdjust="spacingAndGlyphs">33.33</text><text x="549.20" y="653.60" font-size="10" fill="#f2f2f2" textLength="23.60" lengthAdjust="spacingAndGlyphs">36.66</text><text x="566.50" y="703.90" font-size="10" fill="#f2f2f2" textLength="23.60" lengthAdjust="spacingAndGlyphs">40.00</text><path d="M382.71 605.59L466.65 704.27L461.35 708.53Z" fill="#32cd32"/><path d="M382.71 605.59L461.35 708.53" stroke="#d8f0d8" stroke-width="0.8" fill="none"/><rect x="462" y="704.0" width="4" height="4" fill="#32cd32" stroke="#e8ffe8" stroke-width="0.9"/><text x="419.00" y="724.70" font-size="10" fill="#f2f2f2" textLength="90.00" lengthAdjust="spacingAndGlyphs">22/03/2013 15:53:10</text><rect x="554" y="535" width="55.20" height="28.20" fill="#5c5c5c"/><text x="554.90" y="556.80" font-size="21.4" fill="#ffffff" textLength="53.40" lengthAdjust="spacingAndGlyphs">25.68</text><text x="604.70" y="732.30" font-size="10" fill="#f2f2f2" textLength="4.60" lengthAdjust="spacingAndGlyphs">8</text>
</svg></section>
<section style="left:620px;top:456px;width:310px;height:228px"><svg width="310" height="228" viewBox="620 509 310 228" role="img" aria-label="Radar 9">
<rect x="620.4" y="509.5" width="309.40" height="226.00" fill="#000"/><text x="627.00" y="523.10" font-size="10" fill="#f2f2f2" textLength="60.30" lengthAdjust="spacingAndGlyphs">222333 - Data</text><rect x="626.40" y="530.90" width="14" height="13.4" fill="#ff0000"/><text x="642.60" y="541.80" font-size="10" fill="#f2f2f2" textLength="45.60" lengthAdjust="spacingAndGlyphs">(H) : 118.0</text><circle cx="775.5" cy="622.3" r="22.75" fill="none" stroke="#ffffff" stroke-width="1.3"/><circle cx="775.5" cy="622.3" r="45.5" fill="none" stroke="#ffffff" stroke-width="1.3"/><circle cx="775.5" cy="622.3" r="68.2" fill="none" stroke="#ffffff" stroke-width="1.3"/><circle cx="775.5" cy="622.3" r="91" fill="none" stroke="#ffffff" stroke-width="1.3"/><circle cx="775.5" cy="622.3" r="89" fill="none" stroke="#c00000" stroke-width="1" stroke-dasharray="7 3"/><circle cx="775.5" cy="622.3" r="11.5" fill="none" stroke="#2850c8" stroke-width="0.9"/><path d="M775.5 531.3V713.3M684.5 622.3H866.5" stroke="#ffffff" stroke-width="1.1"/><path d="M775.5 622.3L861.92 626.07A86.5 86.5 0 0 1 858.13 647.88Z" fill="#32cd32"/><text x="729.35" y="727.60" font-size="10" fill="#f2f2f2" textLength="90.50" lengthAdjust="spacingAndGlyphs">22/03/2013 15:53:10</text><rect x="864.1" y="535" width="55.70" height="28.20" fill="#5c5c5c"/><text x="865.25" y="556.80" font-size="21.4" fill="#ffffff" textLength="53.40" lengthAdjust="spacingAndGlyphs">115.0</text><rect x="630" y="704.3" width="55.20" height="28.10" fill="#5c5c5c"/><text x="630.90" y="726.00" font-size="21.4" fill="#ffffff" textLength="53.40" lengthAdjust="spacingAndGlyphs">100.0</text><text x="915.70" y="732.30" font-size="10" fill="#f2f2f2" textLength="4.60" lengthAdjust="spacingAndGlyphs">9</text>
</svg></section>
</main>
<aside>
<svg width="30" height="684" viewBox="930 53 30 684" role="img" aria-label="Status indicators">
<rect x="931.4" y="53.5" width="27.6" height="682" fill="#000000"/><circle cx="945.6" cy="90.0" r="11.2" fill="url(#ring)"/><path d="M936.0 93.4q3.4 7.4 9.6 7.4t9.6-7.4" fill="none" stroke="#8c8c8c" stroke-width="1.1" opacity="0.8"/><circle cx="945.6" cy="89.6" r="8.5" fill="#0c5c0c"/><circle cx="945.6" cy="90.0" r="8.1" fill="url(#ledg)"/><ellipse cx="942.6" cy="86.6" rx="1.5" ry="1" fill="#ffffff" opacity="0.8"/><ellipse cx="949.6" cy="85.0" rx="2.1" ry="1" fill="#ffffff" opacity="0.4" transform="rotate(35 949.6 85.0)"/><path d="M939.3000000000001 93.4q4.5 2 8.5 -1.2q3 -3 5 -1.4q-1.4 5.6 -7 6.4q-4.2 0.2 -6.5 -3.8z" fill="#d8ffd0" opacity="0.45"/><rect x="931.4" y="126.70" width="27.6" height="1.4" fill="#2b2b2b"/><circle cx="945.6" cy="165.84" r="11.2" fill="url(#ring)"/><path d="M936.0 169.24q3.4 7.4 9.6 7.4t9.6-7.4" fill="none" stroke="#8c8c8c" stroke-width="1.1" opacity="0.8"/><circle cx="945.6" cy="165.44" r="8.5" fill="#3c3c3c"/><circle cx="945.6" cy="165.84" r="8.1" fill="url(#ledx)"/><ellipse cx="942.6" cy="162.44" rx="1.5" ry="1" fill="#ffffff" opacity="0.8"/><ellipse cx="949.6" cy="160.84" rx="2.1" ry="1" fill="#ffffff" opacity="0.4" transform="rotate(35 949.6 160.84)"/><path d="M939.3000000000001 169.24q4.5 2 8.5 -1.2q3 -3 5 -1.4q-1.4 5.6 -7 6.4q-4.2 0.2 -6.5 -3.8z" fill="#e6e6e6" opacity="0.45"/><rect x="931.4" y="202.50" width="27.6" height="1.4" fill="#2b2b2b"/><circle cx="945.6" cy="241.68" r="11.2" fill="url(#ring)"/><path d="M936.0 245.08q3.4 7.4 9.6 7.4t9.6-7.4" fill="none" stroke="#8c8c8c" stroke-width="1.1" opacity="0.8"/><circle cx="945.6" cy="241.28" r="8.5" fill="#3c3c3c"/><circle cx="945.6" cy="241.68" r="8.1" fill="url(#ledx)"/><ellipse cx="942.6" cy="238.28" rx="1.5" ry="1" fill="#ffffff" opacity="0.8"/><ellipse cx="949.6" cy="236.68" rx="2.1" ry="1" fill="#ffffff" opacity="0.4" transform="rotate(35 949.6 236.68)"/><path d="M939.3000000000001 245.08q4.5 2 8.5 -1.2q3 -3 5 -1.4q-1.4 5.6 -7 6.4q-4.2 0.2 -6.5 -3.8z" fill="#e6e6e6" opacity="0.45"/><rect x="931.4" y="278.30" width="27.6" height="1.4" fill="#2b2b2b"/><circle cx="945.6" cy="317.52" r="11.2" fill="url(#ring)"/><path d="M936.0 320.91999999999996q3.4 7.4 9.6 7.4t9.6-7.4" fill="none" stroke="#8c8c8c" stroke-width="1.1" opacity="0.8"/><circle cx="945.6" cy="317.12" r="8.5" fill="#3c3c3c"/><circle cx="945.6" cy="317.52" r="8.1" fill="url(#ledx)"/><ellipse cx="942.6" cy="314.12" rx="1.5" ry="1" fill="#ffffff" opacity="0.8"/><ellipse cx="949.6" cy="312.52" rx="2.1" ry="1" fill="#ffffff" opacity="0.4" transform="rotate(35 949.6 312.52)"/><path d="M939.3000000000001 320.91999999999996q4.5 2 8.5 -1.2q3 -3 5 -1.4q-1.4 5.6 -7 6.4q-4.2 0.2 -6.5 -3.8z" fill="#e6e6e6" opacity="0.45"/><rect x="931.4" y="354.10" width="27.6" height="1.4" fill="#2b2b2b"/><circle cx="945.6" cy="393.36" r="11.2" fill="url(#ring)"/><path d="M936.0 396.76q3.4 7.4 9.6 7.4t9.6-7.4" fill="none" stroke="#8c8c8c" stroke-width="1.1" opacity="0.8"/><circle cx="945.6" cy="392.96000000000004" r="8.5" fill="#6c0c1c"/><circle cx="945.6" cy="393.36" r="8.1" fill="url(#ledr)"/><ellipse cx="942.6" cy="389.96000000000004" rx="1.5" ry="1" fill="#ffffff" opacity="0.8"/><ellipse cx="949.6" cy="388.36" rx="2.1" ry="1" fill="#ffffff" opacity="0.4" transform="rotate(35 949.6 388.36)"/><path d="M939.3000000000001 396.76q4.5 2 8.5 -1.2q3 -3 5 -1.4q-1.4 5.6 -7 6.4q-4.2 0.2 -6.5 -3.8z" fill="#ffd0d8" opacity="0.45"/><rect x="931.4" y="429.90" width="27.6" height="1.4" fill="#2b2b2b"/><circle cx="945.6" cy="469.2" r="11.2" fill="url(#ring)"/><path d="M936.0 472.59999999999997q3.4 7.4 9.6 7.4t9.6-7.4" fill="none" stroke="#8c8c8c" stroke-width="1.1" opacity="0.8"/><circle cx="945.6" cy="468.8" r="8.5" fill="#0c5c0c"/><circle cx="945.6" cy="469.2" r="8.1" fill="url(#ledg)"/><ellipse cx="942.6" cy="465.8" rx="1.5" ry="1" fill="#ffffff" opacity="0.8"/><ellipse cx="949.6" cy="464.2" rx="2.1" ry="1" fill="#ffffff" opacity="0.4" transform="rotate(35 949.6 464.2)"/><path d="M939.3000000000001 472.59999999999997q4.5 2 8.5 -1.2q3 -3 5 -1.4q-1.4 5.6 -7 6.4q-4.2 0.2 -6.5 -3.8z" fill="#d8ffd0" opacity="0.45"/><rect x="931.4" y="505.70" width="27.6" height="1.4" fill="#2b2b2b"/><circle cx="945.6" cy="545.04" r="11.2" fill="url(#ring)"/><path d="M936.0 548.4399999999999q3.4 7.4 9.6 7.4t9.6-7.4" fill="none" stroke="#8c8c8c" stroke-width="1.1" opacity="0.8"/><circle cx="945.6" cy="544.64" r="8.5" fill="#0c5c0c"/><circle cx="945.6" cy="545.04" r="8.1" fill="url(#ledg)"/><ellipse cx="942.6" cy="541.64" rx="1.5" ry="1" fill="#ffffff" opacity="0.8"/><ellipse cx="949.6" cy="540.04" rx="2.1" ry="1" fill="#ffffff" opacity="0.4" transform="rotate(35 949.6 540.04)"/><path d="M939.3000000000001 548.4399999999999q4.5 2 8.5 -1.2q3 -3 5 -1.4q-1.4 5.6 -7 6.4q-4.2 0.2 -6.5 -3.8z" fill="#d8ffd0" opacity="0.45"/><rect x="931.4" y="581.50" width="27.6" height="1.4" fill="#2b2b2b"/><circle cx="945.6" cy="620.88" r="11.2" fill="url(#ring)"/><path d="M936.0 624.28q3.4 7.4 9.6 7.4t9.6-7.4" fill="none" stroke="#8c8c8c" stroke-width="1.1" opacity="0.8"/><circle cx="945.6" cy="620.48" r="8.5" fill="#0c5c0c"/><circle cx="945.6" cy="620.88" r="8.1" fill="url(#ledg)"/><ellipse cx="942.6" cy="617.48" rx="1.5" ry="1" fill="#ffffff" opacity="0.8"/><ellipse cx="949.6" cy="615.88" rx="2.1" ry="1" fill="#ffffff" opacity="0.4" transform="rotate(35 949.6 615.88)"/><path d="M939.3000000000001 624.28q4.5 2 8.5 -1.2q3 -3 5 -1.4q-1.4 5.6 -7 6.4q-4.2 0.2 -6.5 -3.8z" fill="#d8ffd0" opacity="0.45"/><rect x="931.4" y="657.30" width="27.6" height="1.4" fill="#2b2b2b"/><circle cx="945.6" cy="696.72" r="11.2" fill="url(#ring)"/><path d="M936.0 700.12q3.4 7.4 9.6 7.4t9.6-7.4" fill="none" stroke="#8c8c8c" stroke-width="1.1" opacity="0.8"/><circle cx="945.6" cy="696.32" r="8.5" fill="#0c5c0c"/><circle cx="945.6" cy="696.72" r="8.1" fill="url(#ledg)"/><ellipse cx="942.6" cy="693.32" rx="1.5" ry="1" fill="#ffffff" opacity="0.8"/><ellipse cx="949.6" cy="691.72" rx="2.1" ry="1" fill="#ffffff" opacity="0.4" transform="rotate(35 949.6 691.72)"/><path d="M939.3000000000001 700.12q4.5 2 8.5 -1.2q3 -3 5 -1.4q-1.4 5.6 -7 6.4q-4.2 0.2 -6.5 -3.8z" fill="#d8ffd0" opacity="0.45"/>
</svg>
</aside>
<footer>
<svg width="960" height="31" viewBox="0 737 960 31" role="img" aria-label="Status bar">
<circle cx="16.6" cy="758" r="6.4" fill="none" stroke="#3c78ec" stroke-width="1.7"/><path d="M16.6 754.2v4.2h3" fill="none" stroke="#3c78ec" stroke-width="1.4"/><text x="37.60" y="762.40" font-size="9.8" fill="#f0f0f0" textLength="87.40" lengthAdjust="spacingAndGlyphs">22/03/2013 16:40:40</text><circle cx="173.8" cy="758" r="7" fill="url(#orb)"/><ellipse cx="173.8" cy="754.4" rx="4.6" ry="2.6" fill="#ffffff" opacity="0.55"/><text x="187.60" y="762.40" font-size="9.8" fill="#f0f0f0" textLength="50.00" lengthAdjust="spacingAndGlyphs">Direct Mode</text><text x="482.80" y="760.40" font-size="11.5" fill="#ffffff" font-weight="bold" textLength="36.80" lengthAdjust="spacingAndGlyphs">Page 1</text><g fill="none" stroke-linecap="round"><path d="M816 748.8Q828 746.6 836.6 750.8T844 756.4" stroke="#ffffff" stroke-width="1.3"/><path d="M816.4 749.6Q819 750.8 822 750.6Q830 750 836 753T842.6 757" stroke="#b4b4b4" stroke-width="1"/><path d="M820 754.4Q828.6 752.4 835 754.8T840.6 757.6" stroke="#f0f0f0" stroke-width="1.5"/></g><text x="825.50" y="762.70" font-size="10.4" fill="#ffffff" font-weight="bold" textLength="52.90" lengthAdjust="spacingAndGlyphs" style="font-style:italic;font-family:&quot;Liberation Serif&quot;,&quot;DejaVu Serif&quot;,serif">EaseMind</text><text x="892.20" y="762.40" font-size="9.5" fill="#e6e6e6" textLength="58.20" lengthAdjust="spacingAndGlyphs">Version : 2.3.6</text>
</svg>
</footer>
</body></html>
